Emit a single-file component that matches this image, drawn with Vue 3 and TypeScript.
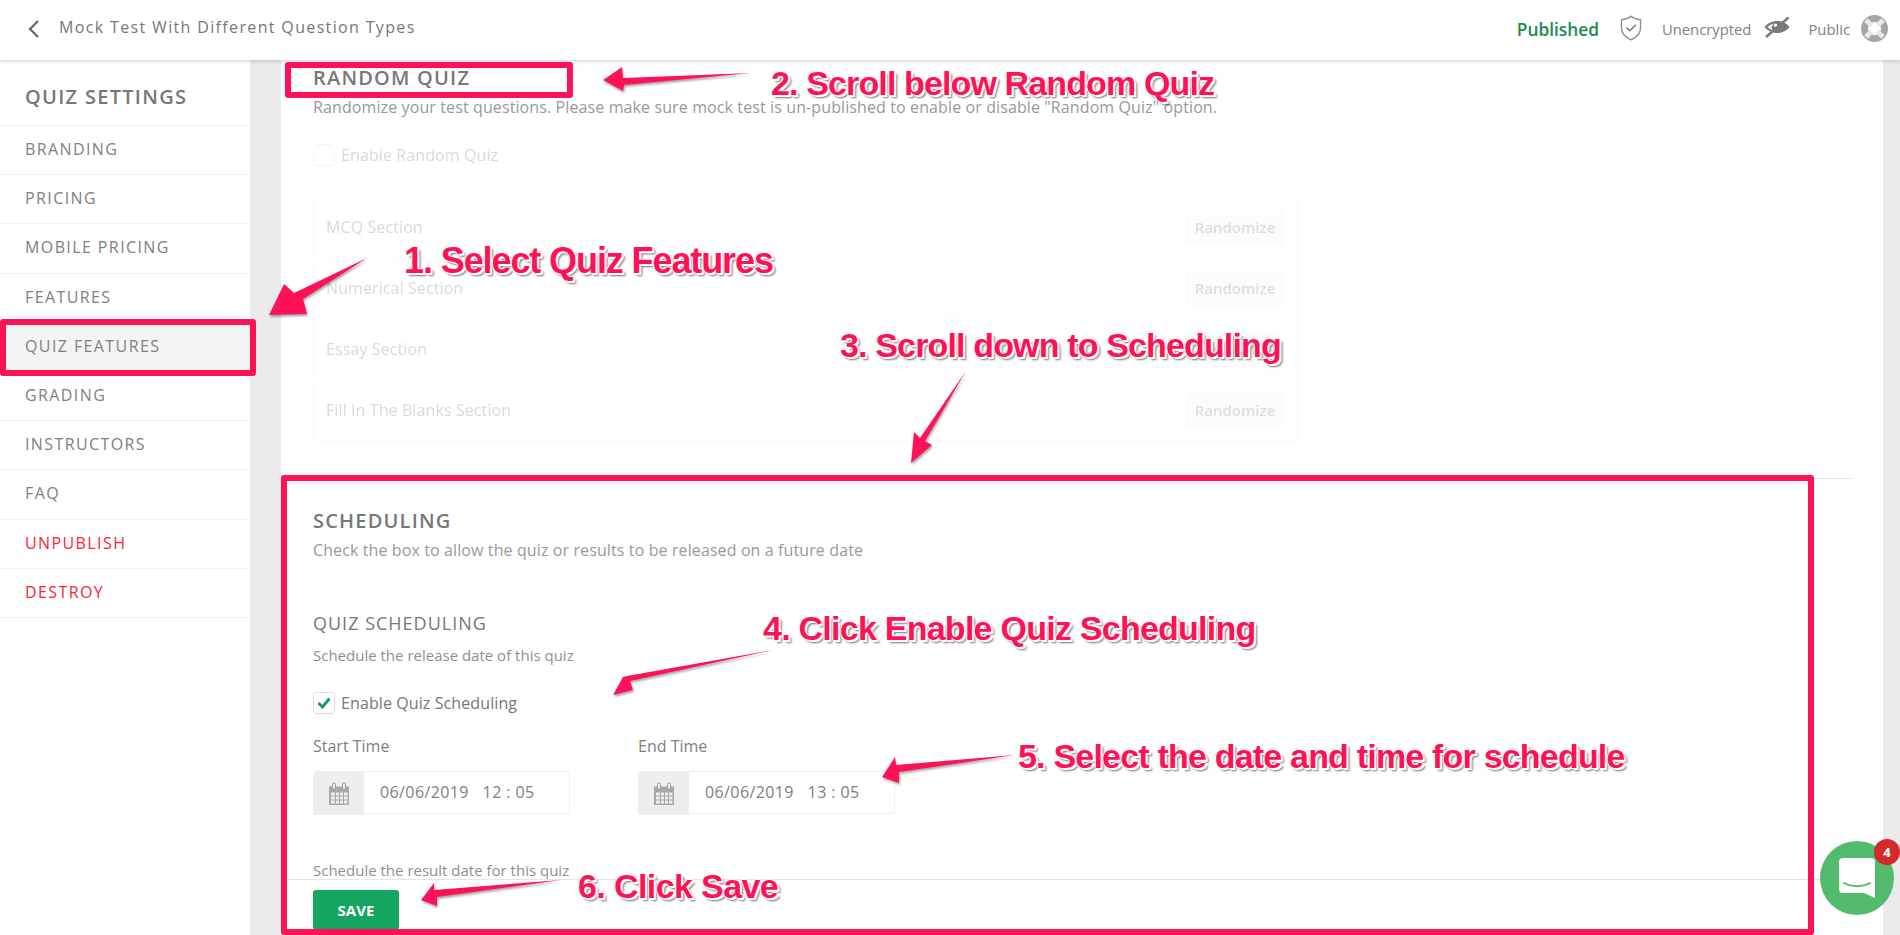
<script setup lang="ts">
const menu = [
  { label: 'BRANDING' },
  { label: 'PRICING' },
  { label: 'MOBILE PRICING' },
  { label: 'FEATURES' },
  { label: 'QUIZ FEATURES', active: true },
  { label: 'GRADING' },
  { label: 'INSTRUCTORS' },
  { label: 'FAQ' },
  { label: 'UNPUBLISH', danger: true },
  { label: 'DESTROY', danger: true },
]
const sections = ['MCQ Section', 'Numerical Section', 'Essay Section', 'Fill In The Blanks Section']
const schedule = [
  { label: 'Start Time', value: '06/06/2019\u00a0\u00a0 12 : 05' },
  { label: 'End Time', value: '06/06/2019\u00a0\u00a0 13 : 05' },
]
const notes = [
  { text: '1. Select Quiz Features', x: 404, y: 240, size: 36, track: -1.1 },
  { text: '2. Scroll below Random Quiz', x: 771, y: 62, size: 34, track: -0.87 },
  { text: '3. Scroll down to Scheduling', x: 840, y: 324, size: 34, track: -0.85 },
  { text: '4. Click Enable Quiz Scheduling', x: 763, y: 607, size: 34, track: -0.75 },
  { text: '5. Select the date and time for schedule', x: 1018, y: 735, size: 34, track: -0.8 },
  { text: '6. Click Save', x: 578, y: 865, size: 34, track: -0.6 },
]
const boxes = [
  { x: 285, y: 62, w: 288, h: 36 },
  { x: 0, y: 319, w: 256, h: 57 },
  { x: 281, y: 475, w: 1533, h: 460 },
]
const arrows = [
  '367,258 303,299 307,314 269,315 284,284 294,293',
  '751,73 623,78 622,67 603,80 623,91 624,85',
  '966,371 925,441 932,445 911,463 914,432 920,438',
  '773,650 630,681 633,690 613,695 623,677 627,676',
  '1015,755 896,765 895,757 882,777 899,783 899,772',
  '561,880 434,890 434,883 421,900 437,906 437,897',
]
</script>

<template>
  <div class="page">
    <header class="topbar">
      <div class="crumb">
        <svg class="chevron" width="14" height="20" viewBox="0 0 14 20"><path d="M11 2 3 10l8 8" fill="none" stroke="#666" stroke-width="2.2" /></svg>
        <span class="crumb-title">Mock Test With Different Question Types</span>
      </div>
      <div class="status">
        <span class="published">Published</span>
        <svg class="shield" width="22" height="26" viewBox="0 0 22 26"><path d="M11 1.2c2.5 2 5.800 3.200 9.500 3.400v8.400c0 5.500-4 9.500-9.500 11.800C5.500 22.500 1.500 18.500 1.500 13V4.600C5.200 4.400 8.500 3.200 11 1.200Z" fill="none" stroke="#8b8b8b" stroke-width="1.300" /><path d="m6.500 12.500 3.300 3.300 6-6" fill="none" stroke="#777" stroke-width="1.500" /></svg>
        <span class="plain unencrypted">Unencrypted</span>
        <svg class="eye" width="26" height="22" viewBox="0 0 26 22"><path d="M0.500 11c3-3.800 7.500-6 12.500-6s9.500 2.200 12.500 6c-3 3.800-7.500 6-12.500 6S3.500 14.800.5 11Z" fill="#7a7a7a" /><path d="M3.500 11c1.800-1.700 4-3 6.500-3.600-1.500 1-2.300 2.400-2.300 3.800 0 1.300.5 2.400 1.500 3.300C7.300 13.800 5.200 12.700 3.500 11Z" fill="#fff" /><circle cx="11.500" cy="9.200" r="1.700" fill="#fff" /><path d="M2 21 24.500 1.500" stroke="#7a7a7a" stroke-width="2.600" /></svg>
        <span class="plain public">Public</span>
        <svg class="ring" width="27" height="27" viewBox="0 0 27 27"><circle cx="13.500" cy="13.500" r="10" fill="none" stroke="#a6a6a6" stroke-width="7" /><path d="m5 5 5.500 5.500M22 5l-5.500 5.500M5 22l5.500-5.500M22 22l-5.500-5.500" stroke="#e8e8e8" stroke-width="5" /></svg>
      </div>
    </header>

    <div class="body">
      <aside class="sidebar">
        <h2 class="side-title">QUIZ SETTINGS</h2>
        <ul class="side-list">
          <li v-for="item in menu" :key="item.label" class="side-item" :class="{ active: item.active, danger: item.danger }">{{ item.label }}</li>
        </ul>
      </aside>

      <main class="main">
        <section class="random">
          <h3 class="sec-title">RANDOM QUIZ</h3>
          <p class="sec-sub">Randomize your test questions. Please make sure mock test is un-published to enable or disable "Random Quiz" option.</p>
          <div class="disabled">
            <label class="check-row"><span class="box"></span>Enable Random Quiz</label>
            <div class="table">
              <div v-for="s in sections" :key="s" class="row">
                <span>{{ s }}</span>
                <button class="rand-btn" type="button">Randomize</button>
              </div>
            </div>
          </div>
        </section>

        <section class="sched">
          <h3 class="sec-title">SCHEDULING</h3>
          <p class="sec-sub">Check the box to allow the quiz or results to be released on a future date</p>
          <h4 class="sub-title">QUIZ SCHEDULING</h4>
          <p class="hint">Schedule the release date of this quiz</p>
          <label class="check-row on">
            <span class="box">
              <svg width="14" height="12" viewBox="0 0 14 12"><path d="m1.500 6 4 4 7-8.500" fill="none" stroke="#14a060" stroke-width="3" /></svg>
            </span>
            Enable Quiz Scheduling
          </label>
          <div class="times">
            <div v-for="t in schedule" :key="t.label" class="time">
              <div class="time-label">{{ t.label }}</div>
              <div class="input">
                <span class="addon">
                  <svg width="22" height="24" viewBox="0 0 22 24"><path d="M1 4.500h20v18.500H1Z" fill="#a8a8a8" /><path d="M3 10.500h4v3H3Zm5 0h3v3H8Zm4 0h3v3h-3Zm4 0h3.500v3H16ZM3 14.500h4v3H3Zm5 0h3v3H8Zm4 0h3v3h-3Zm4 0h3.500v3H16ZM3 18.500h4v3H3Zm5 0h3v3H8Zm4 0h3v3h-3Zm4 0h3.500v3H16Z" fill="#eee" /><rect x="4.500" y="1" width="3" height="6.500" rx="1.500" fill="#ededed" stroke="#999" /><rect x="14.500" y="1" width="3" height="6.500" rx="1.500" fill="#ededed" stroke="#999" /></svg>
                </span>
                <span class="value">{{ t.value }}</span>
              </div>
            </div>
          </div>
          <p class="hint result">Schedule the result date for this quiz</p>
        </section>

        <footer class="savebar">
          <button class="save" type="button">SAVE</button>
        </footer>
      </main>
      <div class="gutter"></div>
    </div>

    <div class="chat">
      <svg width="36" height="40" viewBox="0 0 36 40"><path d="M4 0h28a4 4 0 0 1 4 4v36l-11-5H4a4 4 0 0 1-4-4V4a4 4 0 0 1 4-4Z" fill="#fff" /><path d="M5 25c7.500 4.200 18.500 4.200 26 0" fill="none" stroke="#52bb6e" stroke-width="2" stroke-linecap="round" /></svg>
      <span class="badge">4</span>
    </div>

    <svg class="arrows" width="1900" height="935" viewBox="0 0 1900 935">
      <polygon v-for="p in arrows" :key="p" :points="p" class="arrow" />
    </svg>
    <div v-for="b in boxes" :key="b.y" class="redbox" :style="{ left: b.x + 'px', top: b.y + 'px', width: b.w + 'px', height: b.h + 'px' }"></div>
    <div v-for="n in notes" :key="n.text" class="note" :style="{ left: n.x + 'px', top: n.y + 'px', fontSize: n.size + 'px', letterSpacing: n.track + 'px' }">{{ n.text }}</div>
  </div>
</template>

<style>
html, body { margin: 0; padding: 0; overflow: hidden; }
</style>

<style scoped>
.page {
  position: relative;
  width: 1900px;
  height: 935px;
  overflow: hidden;
  background: #ebebeb;
  font-family: "Open Sans", "Liberation Sans", sans-serif;
  color: #777;
  display: flex;
  flex-direction: column;
}
.topbar {
  height: 60px;
  flex: none;
  background: #fff;
  box-shadow: 0 1px 4px rgba(0, 0, 0, 0.2);
  position: relative;
  z-index: 2;
  display: flex;
  align-items: center;
  justify-content: space-between;
}
.crumb { display: flex; align-items: center; padding-left: 27px; margin-top: -6px; }
.chevron { margin-right: 18px; margin-top: 4px; }
.crumb-title { font-size: 16px; letter-spacing: 1.350px; color: #777; }
.status { display: flex; align-items: center; padding-bottom: 2px; }
.published { font-size: 17.300px; font-weight: 600; color: #1a8a50; margin-right: 21px; }
.shield { margin-right: 20px; margin-top: -2px; }
.plain { font-size: 14.800px; color: #808080; }
.unencrypted { margin-right: 13px; }
.eye { margin-right: 18px; margin-top: -4px; }
.public { margin-right: 11px; }
.ring { margin-right: 12px; margin-top: -2px; }

.body { flex: 1; display: flex; min-height: 0; }
.sidebar { width: 250px; flex: none; background: #fff; margin-right: 31px; }
.side-title {
  margin: 0;
  height: 65px;
  box-sizing: border-box;
  padding: 24px 0 0 25px;
  font-size: 20px;
  line-height: 25px;
  font-weight: 600;
  letter-spacing: 1.300px;
  color: #777;
}
.side-list { list-style: none; margin: 0; padding: 0; border-top: 1px solid #f0f0f0; }
.side-item {
  height: 48.200px;
  line-height: 47px;
  padding-left: 25px;
  border-bottom: 1px solid #f0f0f0;
  font-size: 16px;
  letter-spacing: 1.400px;
  color: #808080;
}
.side-item.active { background: #f4f4f4; }
.side-item.danger { color: #fb2436; }

.main { position: relative; flex: 1; background: #fff; overflow: hidden; padding-left: 32px; }
.gutter { width: 17px; flex: none; }
.random { height: 419px; box-sizing: border-box; border-bottom: 1px solid #e6e6e6; margin-right: 31px; padding-top: 5px; }
.sec-title { margin: 0; font-size: 20px; line-height: 26px; font-weight: 600; letter-spacing: 1.200px; color: #777; }
.sec-sub { margin: 4px 0 0; font-size: 16px; line-height: 24px; letter-spacing: 0.110px; color: #999; }
.disabled { opacity: 0.28; margin-top: 25px; }
.check-row { display: flex; align-items: center; font-size: 16px; line-height: 22px; letter-spacing: 0.100px; color: #777; }
.box {
  width: 22px;
  height: 22px;
  box-sizing: border-box;
  border: 1px solid #ddd;
  border-radius: 3px;
  margin-right: 6px;
  display: flex;
  align-items: center;
  justify-content: center;
}
.table { width: 983px; margin-top: 30px; border: 1px solid #ececec; box-sizing: content-box; }
.row {
  height: 60px;
  display: flex;
  align-items: center;
  justify-content: space-between;
  padding: 0 13px 0 12px;
  border-bottom: 1px solid #ececec;
  font-size: 16px;
  letter-spacing: 0.100px;
  color: #777;
}
.row:last-child { border-bottom: 0; }
.rand-btn {
  width: 98px;
  height: 35px;
  padding: 0;
  border: 1px solid #eee;
  border-radius: 3px;
  background: #f7f7f7;
  color: #888;
  font: 600 15px "Open Sans", sans-serif;
}
.sched { padding-top: 29px; }
.sub-title { margin: 50px 0 0; font-size: 18px; line-height: 22px; font-weight: 400; letter-spacing: 1px; color: #777; }
.hint { margin: 10px 0 0; font-size: 15px; line-height: 22px; color: #8f8f8f; }
.check-row.on { margin-top: 26px; }
.times { display: flex; gap: 68px; margin-top: 20px; }
.time { width: 257px; }
.time-label { font-size: 16px; line-height: 24px; color: #808080; }
.input { display: flex; height: 41px; margin-top: 13px; border: 1px solid #f0f0f0; border-left: 0; border-radius: 3px; }
.addon {
  width: 51px;
  height: 43px;
  flex: none;
  background: #eee;
  border-radius: 3px 0 0 3px;
  display: flex;
  align-items: center;
  justify-content: center;
}
.value { font-size: 16px; letter-spacing: 0.400px; line-height: 41px; padding-left: 16px; color: #808080; white-space: nowrap; }
.result { margin-top: 45px; }
.savebar {
  position: absolute;
  left: 0;
  right: 0;
  bottom: 0;
  height: 56px;
  box-sizing: border-box;
  background: #fff;
  border-top: 1px solid #e4e4e4;
  padding: 10px 0 0 32px;
}
.save {
  width: 86px;
  height: 40px;
  padding: 0;
  border: 0;
  border-radius: 3px;
  background: #14a660;
  color: #fff;
  font: 700 15px "Open Sans", sans-serif;
}
.chat {
  position: absolute;
  left: 1820px;
  top: 841px;
  width: 74px;
  height: 74px;
  border-radius: 50%;
  background: #52bb6e;
  display: flex;
  align-items: center;
  justify-content: center;
  z-index: 3;
}
.badge {
  position: absolute;
  left: 54px;
  top: -2px;
  width: 26px;
  height: 26px;
  border-radius: 50%;
  background: #d32a2a;
  color: #fff;
  font: 700 13px/26px "Open Sans", sans-serif;
  text-align: center;
}
.arrows { position: absolute; left: 0; top: 0; z-index: 4; filter: drop-shadow(1px 2px 1px rgba(0, 0, 0, 0.35)); }
.arrow { fill: #ff1158; }
.redbox {
  position: absolute;
  box-sizing: border-box;
  border: 6px solid #ff1158;
  border-radius: 3px;
  z-index: 4;
}
.note {
  position: absolute;
  z-index: 5;
  white-space: nowrap;
  font-family: "Liberation Sans", Arial, sans-serif;
  font-weight: 700;
  line-height: 42px;
  color: #ff1158;
  text-shadow: -1px 0 0 #fff, 1px 0 0 #fff, 0 -1px 0 #fff, 0 1px 0 #fff, 2px 2px 0 #fff, 3px 3px 2px rgba(0, 0, 0, 0.55);
}
</style>
